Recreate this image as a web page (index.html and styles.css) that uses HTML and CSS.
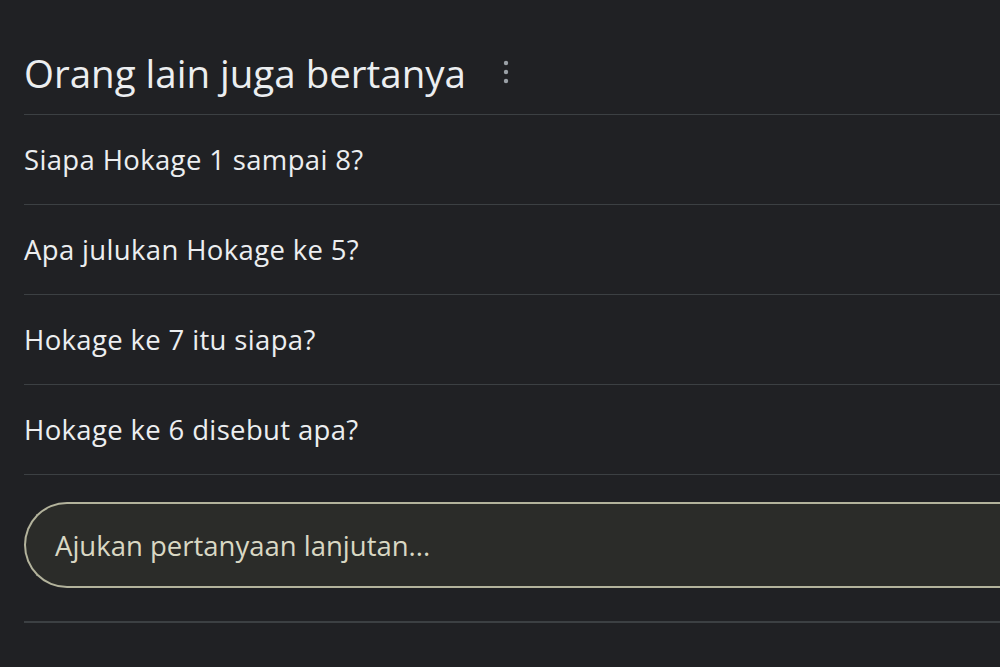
FILE: index.html
```html
<!DOCTYPE html>
<html lang="id">
<head>
<meta charset="utf-8">
<title>Orang lain juga bertanya</title>
<link rel="stylesheet" href="styles.css">
</head>
<body>
<div class="page">
  <section class="paa">
    <header class="paa-head">
      <h2 class="paa-title">Orang lain juga bertanya</h2>
      <svg class="paa-menu" width="6" height="24" viewBox="0 0 6 24" aria-hidden="true">
        <circle cx="3" cy="3" r="2.2" fill="#9aa0a6"/>
        <circle cx="3" cy="12" r="2.2" fill="#9aa0a6"/>
        <circle cx="3" cy="21" r="2.2" fill="#9aa0a6"/>
      </svg>
    </header>
    <ul class="paa-list">
      <li class="paa-item">Siapa Hokage 1 sampai 8?</li>
      <li class="paa-item">Apa julukan Hokage ke 5?</li>
      <li class="paa-item">Hokage ke 7 itu siapa?</li>
      <li class="paa-item">Hokage ke 6 disebut apa?</li>
    </ul>
    <div class="followup">
      <div class="followup-box">Ajukan pertanyaan lanjutan...</div>
    </div>
  </section>
</div>
</body>
</html>
```

FILE: styles.css
```css
html, body {
  margin: 0;
  padding: 0;
  background: #202124;
  overflow: hidden;
}
.page {
  width: 1000px;
  height: 667px;
  overflow: hidden;
  font-family: "Open Sans", "Liberation Sans", sans-serif;
}
.paa {
  margin-left: 24px;
  width: 1100px;
  padding-top: 44px;
}
.paa-head {
  display: flex;
  align-items: center;
  height: 70px;
  border-bottom: 1px solid #3c4043;
}
.paa-title {
  margin: 0;
  font-weight: 400;
  font-size: 38.5px;
  color: #eceef0;
  letter-spacing: 0;
  line-height: 60px;
  position: relative;
  top: -6px;
}
.paa-menu {
  margin-left: 37px;
  position: relative;
  top: -7px;
}
.paa-list {
  list-style: none;
  margin: 0;
  padding: 0;
}
.paa-item {
  height: 89px;
  border-bottom: 1px solid #3c4043;
  display: flex;
  align-items: center;
  font-size: 27.5px;
  font-weight: 500;
  color: #eceef0;
  letter-spacing: 0.35px;
}
.followup {
  padding: 27px 0 33px;
  border-bottom: 2px solid #3c4043;
}
.followup-box {
  height: 82px;
  border: 2px solid #b3b39c;
  border-right: none;
  border-radius: 43px 0 0 43px;
  background: #2b2c29;
  display: flex;
  align-items: center;
  padding-left: 29px;
  font-size: 27.5px;
  color: #d9d8c4;
  letter-spacing: 0;
}
```
